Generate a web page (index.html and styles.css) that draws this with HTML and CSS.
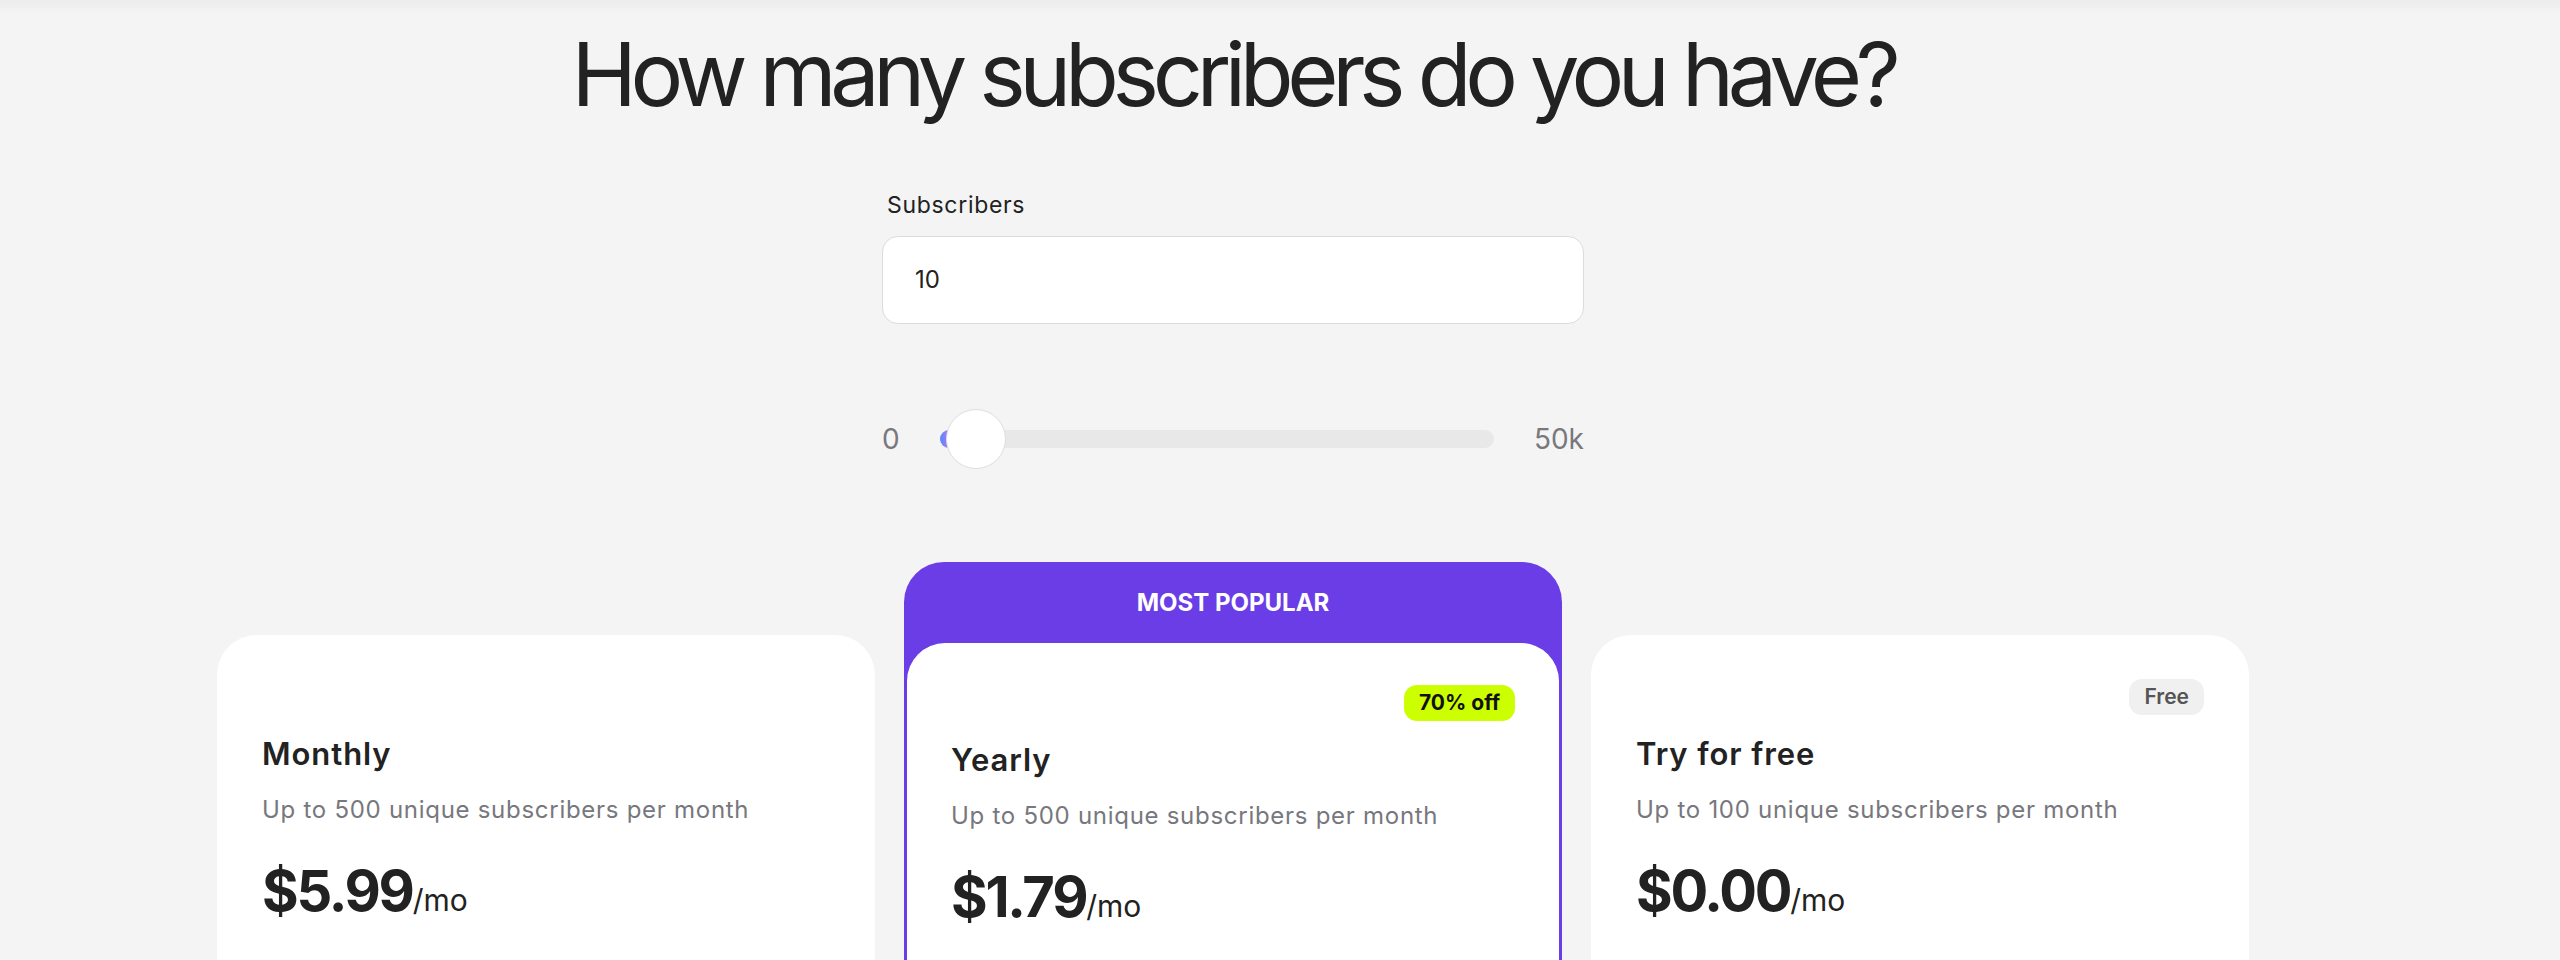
FILE: index.html
```html
<!doctype html>
<html lang="en">
  <head>
    <meta charset="UTF-8" />
    <meta name="viewport" content="width=device-width, initial-scale=1.0" />
    <title>Pricing</title>
    <link rel="stylesheet" href="styles.css">
  </head>
  <body>

    <div class="page">
      <h1 class="title">How many subscribers do you have?</h1>

      <div class="calc">
        <label class="calc-label" for="subs">Subscribers</label>
        <input class="calc-input" id="subs" type="text" value="10" />

        <div class="range">
          <span class="range-end">0</span>
          <div class="range-track">
            <div class="range-fill" style="width: 36px"></div>
            <div class="range-thumb" style="left: 6px"></div>
          </div>
          <span class="range-end">50k</span>
        </div>
      </div>

      <div class="plans">
        <div class="plan">
          <div class="plan-top"></div>
          <h4 class="plan-name">Monthly</h4>
          <p class="plan-desc">Up to 500 unique subscribers per month</p>
          <p class="plan-price">$5.99<span class="per">/mo</span></p>
        </div>

        <div class="plan-popular">
          <div class="popular-head">MOST POPULAR</div>
          <div class="plan plan-inner">
            <div class="plan-top"><span class="badge badge-lime">70% off</span></div>
            <h4 class="plan-name">Yearly</h4>
            <p class="plan-desc">Up to 500 unique subscribers per month</p>
            <p class="plan-price">$1.79<span class="per">/mo</span></p>
          </div>
        </div>

        <div class="plan">
          <div class="plan-top"><span class="badge">Free</span></div>
          <h4 class="plan-name">Try for free</h4>
          <p class="plan-desc">Up to 100 unique subscribers per month</p>
          <p class="plan-price">$0.00<span class="per">/mo</span></p>
        </div>
      </div>
    </div>

  </body>
</html>
```

FILE: styles.css
```css
body {
  margin: 0;
  background: linear-gradient(#ececec, #f4f4f4 14px) #f4f4f4;
  font-family: "Inter", "DejaVu Sans", sans-serif;
  color: #222222;
}

.page {
  width: 2032px;
  margin-left: 217px;
  padding-top: 22px;
}

.title {
  margin: 0;
  font-size: 88px;
  font-weight: 400;
  line-height: 1.2;
  letter-spacing: -0.072em;
  text-align: center;
  color: #222222;
}

/* subscriber calculator */
.calc {
  width: 702px;
  margin: 62px auto 0;
}
.calc-label {
  display: block;
  margin: 0 0 15px 5px;
  font-size: 23px;
  line-height: 1.35;
  letter-spacing: 0.03em;
  color: #222222;
}
.calc-input {
  display: block;
  box-sizing: border-box;
  width: 100%;
  height: 88px;
  padding: 0 32px;
  border: 1.5px solid #dcdcdc;
  border-radius: 16px;
  background-color: #ffffff;
  font-family: inherit;
  font-size: 24px;
  color: #222222;
  outline: none;
}

.range {
  display: flex;
  align-items: center;
  gap: 40px;
  height: 60px;
  margin-top: 85px;
}
.range-end {
  font-size: 28px;
  color: #78787e;
}
.range-track {
  position: relative;
  flex: 1;
  height: 18px;
  border-radius: 9px;
  background-color: #e8e8e8;
}
.range-fill {
  height: 100%;
  border-radius: 9px;
  background: linear-gradient(90deg, #4f8ff7, #c86cf5 30%);
}
.range-thumb {
  position: absolute;
  top: -21px;
  box-sizing: border-box;
  width: 60px;
  height: 60px;
  border: 1.5px solid #dedede;
  border-radius: 50%;
  background-color: #ffffff;
}

/* plans */
.plans {
  display: flex;
  align-items: flex-start;
  gap: 29px;
  margin-top: 93px;
}
.plan {
  flex: none;
  box-sizing: border-box;
  width: 658px;
  min-height: 520px;
  margin-top: 73px;
  padding: 44px 45px;
  border-radius: 40px;
  background-color: #ffffff;
}
.plan-popular {
  flex: none;
  box-sizing: border-box;
  width: 658px;
  padding: 0 3px 3px;
  border-radius: 40px;
  background-color: #6a3de6;
}
.popular-head {
  height: 81px;
  line-height: 81px;
  font-size: 24px;
  font-weight: 700;
  color: #ffffff;
  text-align: center;
}
.plan-inner {
  width: auto;
  margin-top: 0;
  padding: 42px 44px;
  border-radius: 38px;
}

.plan-top {
  display: flex;
  justify-content: flex-end;
  height: 36px;
}
.badge {
  padding: 0 15px;
  border-radius: 13px;
  background-color: #f0f0f0;
  font-size: 21px;
  font-weight: 600;
  line-height: 36px;
  color: #555555;
}
.badge-lime {
  background-color: #ccff00;
  font-weight: 700;
  color: #111111;
}

.plan-name {
  margin: 19px 0 0;
  font-size: 31px;
  font-weight: 600;
  line-height: 1.26;
  letter-spacing: 0.03em;
}
.plan-desc {
  margin: 20px 0 0;
  font-size: 24px;
  line-height: 1.4;
  letter-spacing: 0.03em;
  color: #77777e;
}
.plan-price {
  margin: 32px 0 0;
  font-size: 56px;
  font-weight: 700;
  line-height: 1.2;
  letter-spacing: -0.04em;
}
.plan-price .per {
  font-size: 30px;
  font-weight: 400;
  letter-spacing: 0;
}
```
